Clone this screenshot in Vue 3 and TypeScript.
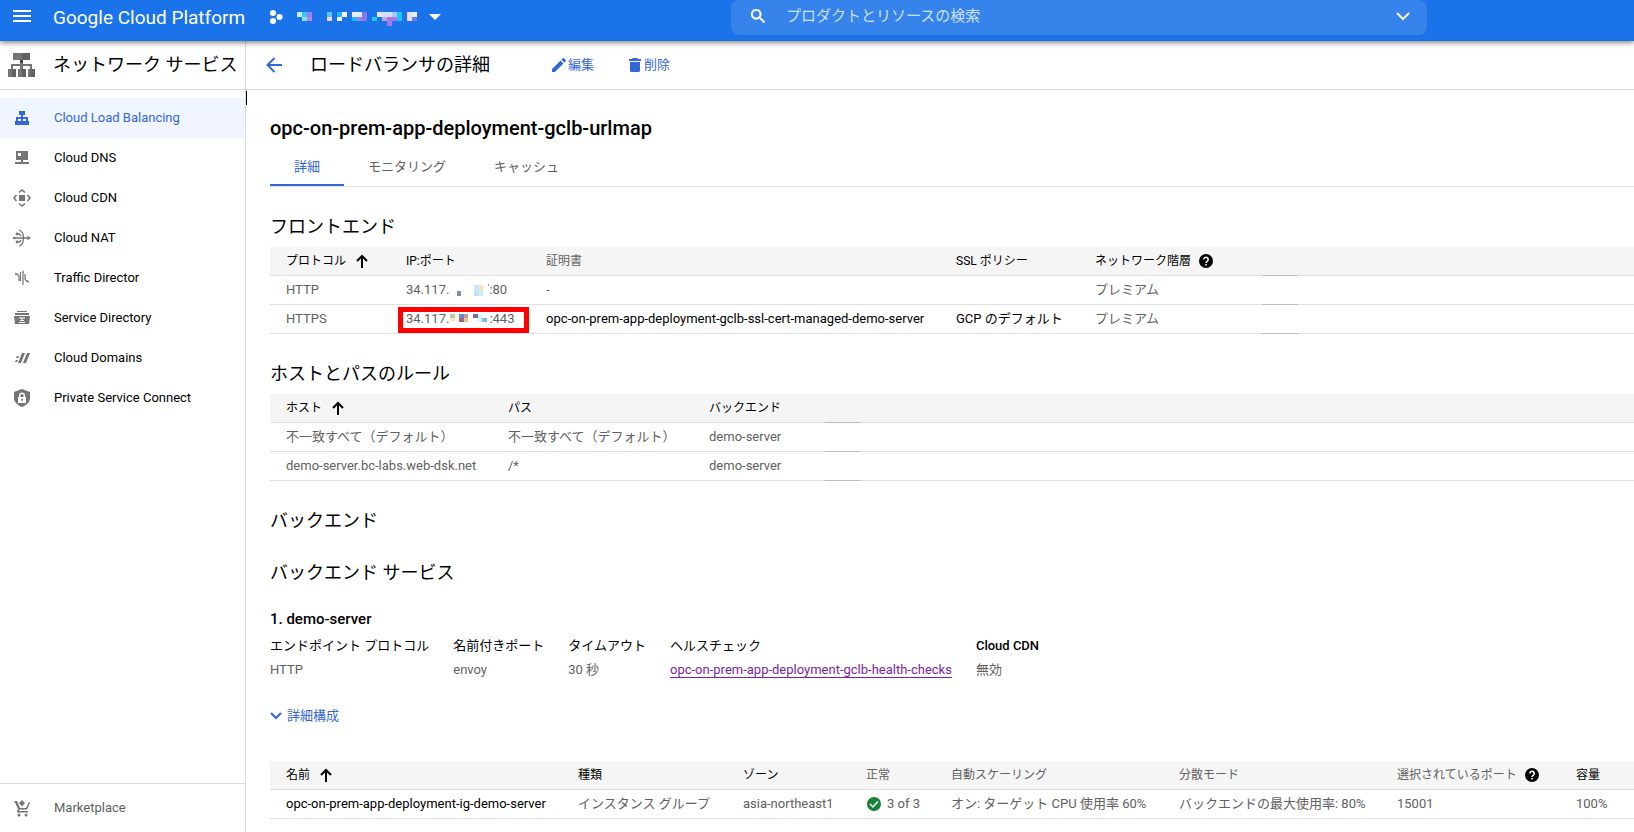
<script setup lang="ts">
interface NavItem {
  label: string
  icon: string
  active?: boolean
}

interface Cell {
  x: number
  y: number
  w: number
  h: number
  fill: string
}

const navItems: NavItem[] = [
  { label: 'Cloud Load Balancing', icon: 'balancing', active: true },
  { label: 'Cloud DNS', icon: 'dns' },
  { label: 'Cloud CDN', icon: 'cdn' },
  { label: 'Cloud NAT', icon: 'nat' },
  { label: 'Traffic Director', icon: 'traffic' },
  { label: 'Service Directory', icon: 'directory' },
  { label: 'Cloud Domains', icon: 'domains' },
  { label: 'Private Service Connect', icon: 'private' },
]

const tabs = ['詳細', 'モニタリング', 'キャッシュ']

const projectCells: Cell[] = [
  { x: 0, y: 0, w: 5, h: 5, fill: '#c3f3ff' },
  { x: 5, y: 0, w: 5, h: 5, fill: '#35c5ff' },
  { x: 10, y: 0, w: 5, h: 5, fill: '#a47ae8' },
  { x: 5, y: 5, w: 5, h: 4, fill: '#8ce0ff' },
  { x: 10, y: 5, w: 5, h: 4, fill: '#b08aea' },
  { x: 30, y: 0, w: 5, h: 5, fill: '#62c4ff' },
  { x: 30, y: 5, w: 5, h: 4, fill: '#f0d5f0' },
  { x: 40, y: 0, w: 5, h: 5, fill: '#1ab8ff' },
  { x: 45, y: 0, w: 5, h: 5, fill: '#ffffff' },
  { x: 40, y: 5, w: 5, h: 4, fill: '#ffffff' },
  { x: 55, y: 0, w: 5, h: 5, fill: '#f7e5f7' },
  { x: 60, y: 0, w: 5, h: 5, fill: '#d0f2fa' },
  { x: 65, y: 0, w: 5, h: 9, fill: '#8b78e8' },
  { x: 55, y: 5, w: 5, h: 4, fill: '#19b5fa' },
  { x: 60, y: 5, w: 5, h: 4, fill: '#a87ce8' },
  { x: 80, y: 0, w: 5, h: 5, fill: '#eee0f5' },
  { x: 85, y: 0, w: 10, h: 5, fill: '#d3def8' },
  { x: 75, y: 5, w: 5, h: 4, fill: '#19ccfa' },
  { x: 85, y: 5, w: 5, h: 4, fill: '#b7a8e6' },
  { x: 90, y: 5, w: 10, h: 4, fill: '#a978e6' },
  { x: 90, y: 9, w: 5, h: 5, fill: '#a978e6' },
  { x: 95, y: 0, w: 5, h: 5, fill: '#a9c8f5' },
  { x: 100, y: 0, w: 5, h: 9, fill: '#18c7ff' },
  { x: 110, y: 0, w: 5, h: 9, fill: '#f0d9f4' },
  { x: 115, y: 0, w: 5, h: 5, fill: '#dcf6fc' },
  { x: 115, y: 5, w: 5, h: 4, fill: '#7475e8' },
]

const httpCells: Cell[] = [
  { x: 8, y: 7, w: 4, h: 5, fill: '#788d9e' },
  { x: 25, y: 1, w: 5, h: 6, fill: '#c4eaff' },
  { x: 30, y: 1, w: 4, h: 6, fill: '#ffe4b8' },
  { x: 25, y: 7, w: 5, h: 5, fill: '#c3e2fa' },
  { x: 30, y: 7, w: 4, h: 5, fill: '#c7f3ff' },
  { x: 39, y: 0, w: 1, h: 2, fill: '#7da8c4' },
]

const httpsCells: Cell[] = [
  { x: 1, y: 0, w: 5, h: 4, fill: '#c5c2a5' },
  { x: 6, y: 0, w: 4, h: 4, fill: '#fff4d6' },
  { x: 10, y: 0, w: 5, h: 4, fill: '#658bc5' },
  { x: 15, y: 0, w: 4, h: 4, fill: '#c5a07d' },
  { x: 1, y: 4, w: 5, h: 4, fill: '#ffeac2' },
  { x: 10, y: 4, w: 5, h: 4, fill: '#9f6280' },
  { x: 15, y: 4, w: 4, h: 4, fill: '#f4c28f' },
  { x: 24, y: 0, w: 5, h: 4, fill: '#77709e' },
  { x: 29, y: 1, w: 4, h: 7, fill: '#cafaff' },
  { x: 33, y: 4, w: 5, h: 4, fill: '#82bde8' },
]
</script>

<template>
  <div class="app">
    <header class="topbar">
      <button class="icon-btn menu" type="button" aria-label="メニュー">
        <svg width="18" height="12" viewBox="0 0 18 12"><path d="M0 1h18M0 6h18M0 11h18" stroke="#fff" stroke-width="2" /></svg>
      </button>
      <a class="brand" href="#">Google Cloud Platform</a>
      <button class="project" type="button" aria-label="プロジェクトを選択">
        <svg width="14" height="14" viewBox="0 0 14 14" fill="#fff"><circle cx="4" cy="3" r="3" /><circle cx="10.500" cy="7" r="3" /><circle cx="4" cy="11" r="3" /></svg>
        <svg class="project-name" width="120" height="14" shape-rendering="crispEdges">
          <rect v-for="(c, i) in projectCells" :key="i" :x="c.x" :y="c.y" :width="c.w" :height="c.h" :fill="c.fill" />
        </svg>
        <svg width="12" height="6" viewBox="0 0 12 6"><path d="M0 0h12L6 6z" fill="#fff" /></svg>
      </button>
      <div class="search">
        <svg width="14" height="14" viewBox="3 3 17.500 17.500" fill="#fff"><path stroke="#fff" stroke-width=".6" d="M15.500 14h-.79l-.28-.27A6.470 6.470 0 0 0 16 9.500 6.500 6.500 0 1 0 9.500 16c1.610 0 3.090-.59 4.230-1.570l.27.28v.79l5 4.990L20.490 19l-4.990-5zm-6 0C7.010 14 5 11.990 5 9.500S7.010 5 9.500 5 14 7.010 14 9.500 11.990 14 9.500 14z" /></svg>
        <input type="search" aria-label="プロダクトとリソースの検索" placeholder="プロダクトとリソースの検索" />
        <button class="icon-btn" type="button" aria-label="検索オプション">
          <svg width="14" height="9" viewBox="0 0 14 9" fill="none"><path d="M1 1l6 6 6-6" stroke="#fff" stroke-width="2" /></svg>
        </button>
      </div>
    </header>

    <div class="body">
      <aside class="sidebar">
        <div class="side-head">
          <svg width="28" height="24" viewBox="0 0 28 24" shape-rendering="crispEdges">
            <path fill="#757575" d="M5 0h17v7H5zM0 16h8v8H0zM10 16h8v8h-8zM20 16h7v8h-7z" />
            <path fill="#616161" d="M14 0h8v7h-8zM4 16h4v8H4zM14 16h4v8h-4zM23 16h4v8h-4z" />
            <path fill="#757575" d="M12 7h3v4h9v5h-2v-3h-7v3h-3v-3H5v3H3v-5h9z" />
            <path fill="#424242" d="M12 7h3v3h-3z" />
          </svg>
          <h2>ネットワーク サービス</h2>
        </div>
        <nav class="nav">
          <a v-for="item in navItems" :key="item.label" href="#" class="nav-item" :class="{ active: item.active }">
            <svg class="nav-icon" width="18" height="18" viewBox="0 0 18 18" fill="currentColor">
              <path v-if="item.icon === 'balancing'" d="M6 2h6v4h-2v2h5v4h1v4h-5v-4h2v-2h-3v2h1v4H7v-4h1v-2H5v2h2v4H2v-4h1V8h5V6H6z" />
              <template v-else-if="item.icon === 'dns'">
                <path fill-rule="evenodd" d="M3 2h12v9H3zM5 4v3h3V4z" />
                <path d="M8 11h2v2h6v2H2v-2h6z" />
              </template>
              <template v-else-if="item.icon === 'cdn'">
                <path d="M6 6h6v6H6z" />
                <path d="M6 3.500 9 1l3 2.500M6 14.500 9 17l3-2.500M3.500 6 1 9l2.500 3M14.500 6 17 9l-2.500 3" fill="none" stroke="currentColor" stroke-width="1.600" />
              </template>
              <template v-else-if="item.icon === 'nat'">
                <path d="M6 1c6 2 6 14 0 16M0 9h16M4 5h2.500l1.500 2M4 13h2.500l1.500-2" fill="none" stroke="currentColor" stroke-width="1.300" />
                <path d="M14.500 6.800 18 9l-3.500 2.200z" />
                <circle cx="1.300" cy="9" r="1.300" /><circle cx="4" cy="5" r="1.400" /><circle cx="4" cy="13" r="1.400" />
              </template>
              <template v-else-if="item.icon === 'traffic'">
                <path d="M3 5c2.500 0 3 1.500 3 4v3M7.500 3v9M10 3v13M12 5v4c0 2.500 1 3 3.500 3.500" fill="none" stroke="currentColor" stroke-width="1.200" />
                <path d="m2 3.500 2.500 1.300L2.500 6.500zM14 11l2.500 2-3 .5zM9 3.500 10 1l1 2.500z" />
              </template>
              <template v-else-if="item.icon === 'directory'">
                <path d="M4 2h10v1H4zM2 4h14v2H2z" />
                <path d="M1 7h16l-1 8H2z" />
                <path d="M6 9h6M9 9v2M7 11.500h4M6 13.500h6" fill="none" stroke="#fff" />
              </template>
              <path v-else-if="item.icon === 'domains'" d="M4 7h2l-1 2H3zM3 11h2l-1 2H2zM9 4h3L8 14H5zM14 4h3l-4 10h-3z" />
              <template v-else>
                <path d="M9 0l8 3v6c0 4-3 7-8 9-5-2-8-5-8-9V3z" />
                <path fill="#fff" fill-rule="evenodd" d="M6 8V6.500a3 3 0 0 1 6 0V8h1v6H5V8zm1.500 0h3V6.500a1.500 1.500 0 0 0-3 0zM9 9.800a1 1 0 1 0 .01 0z" />
              </template>
            </svg>
            {{ item.label }}
          </a>
        </nav>
        <a class="nav-item marketplace" href="#">
          <svg class="nav-icon" width="18" height="18" viewBox="0 0 18 18" fill="currentColor">
            <path d="M2 2h2l3 7h6l3-6 1 1-3 6.500H6.500L6 12h9v1.500H4V12l1-2-3-6.500H1zM9 1l3 3-3 3.500L6 4z" />
            <circle cx="6" cy="16" r="1.500" /><circle cx="13" cy="16" r="1.500" />
          </svg>
          Marketplace
        </a>
        <span class="caret" aria-hidden="true"></span>
      </aside>

      <main class="main">
        <div class="page-head">
          <button class="icon-btn back" type="button" aria-label="戻る">
            <svg width="16" height="16" viewBox="0 0 16 16" fill="none"><path d="M16 8H2M8.500 1 1.500 8l7 7" stroke="#3367d6" stroke-width="2" /></svg>
          </button>
          <h2>ロードバランサの詳細</h2>
          <button class="action edit" type="button">
            <svg width="14" height="14" viewBox="3 3 18 18" fill="#3367d6"><path d="M3 17.250V21h3.750L17.810 9.940l-3.750-3.750zM20.710 7.040a1 1 0 0 0 0-1.410l-2.340-2.340a1 1 0 0 0-1.410 0l-1.830 1.830 3.750 3.750z" /></svg>
            編集
          </button>
          <button class="action" type="button">
            <svg width="12" height="14" viewBox="0 0 12 14" fill="#3367d6"><path d="M4 0h4l1 1h3v2H0V1h3zM1 4h10v8.500a1.500 1.500 0 0 1-1.500 1.500h-7A1.500 1.500 0 0 1 1 12.500z" /></svg>
            削除
          </button>
        </div>

        <div class="content">
          <h1>opc-on-prem-app-deployment-gclb-urlmap</h1>
          <div class="tabs" role="tablist">
            <button v-for="(t, i) in tabs" :key="t" class="tab" :class="{ selected: i === 0 }" type="button" role="tab" :aria-selected="i === 0">{{ t }}</button>
          </div>

          <h3>フロントエンド</h3>
          <table class="frontend">
            <colgroup><col class="w120" /><col class="w140" /><col class="w410" /><col class="w139" /><col class="w183" /><col class="w36" /><col /></colgroup>
            <thead>
              <tr>
                <th scope="col"><span class="head">プロトコル<svg class="sort" width="12" height="14" viewBox="0 0 12 14" fill="none"><path d="M6 14V2M1 7l5-5 5 5" stroke="#000" stroke-width="2" /></svg></span></th>
                <th scope="col">IP:ポート</th>
                <th scope="col" class="muted">証明書</th>
                <th scope="col">SSL ポリシー</th>
                <th scope="col"><span class="head">ネットワーク階層<svg class="help" width="14" height="14" viewBox="0 0 14 14"><circle cx="7" cy="7" r="7" /><path d="M4.800 5.500a2.200 2.200 0 1 1 3.400 1.800C7.300 7.900 7 8.200 7 9" fill="none" stroke="#fff" stroke-width="1.500" /><path d="M6.200 10h1.600v1.600H6.200z" fill="#fff" /></svg></span></th>
                <td class="mark"></td>
                <td></td>
              </tr>
            </thead>
            <tbody>
              <tr>
                <td>HTTP</td>
                <td>34.117.<svg class="redacted" width="40" height="12" shape-rendering="crispEdges"><rect v-for="(c, i) in httpCells" :key="i" :x="c.x" :y="c.y" :width="c.w" :height="c.h" :fill="c.fill" /></svg>:80</td>
                <td>-</td>
                <td></td>
                <td>プレミアム</td>
                <td class="mark"></td>
                <td></td>
              </tr>
              <tr>
                <td>HTTPS</td>
                <td class="flagged">34.117.<svg class="redacted" width="40" height="11" shape-rendering="crispEdges"><rect v-for="(c, i) in httpsCells" :key="i" :x="c.x" :y="c.y" :width="c.w" :height="c.h" :fill="c.fill" /></svg>:443<span class="highlight"></span></td>
                <td class="strong">opc-on-prem-app-deployment-gclb-ssl-cert-managed-demo-server</td>
                <td class="strong">GCP のデフォルト</td>
                <td>プレミアム</td>
                <td class="mark"></td>
                <td></td>
              </tr>
            </tbody>
          </table>

          <h3>ホストとパスのルール</h3>
          <table class="rules">
            <colgroup><col class="w222" /><col class="w201" /><col class="w132" /><col class="w36" /><col /></colgroup>
            <thead>
              <tr>
                <th scope="col"><span class="head">ホスト<svg class="sort" width="12" height="14" viewBox="0 0 12 14" fill="none"><path d="M6 14V2M1 7l5-5 5 5" stroke="#000" stroke-width="2" /></svg></span></th>
                <th scope="col">パス</th>
                <th scope="col">バックエンド</th>
                <td class="mark"></td>
                <td></td>
              </tr>
            </thead>
            <tbody>
              <tr>
                <td>不一致すべて（デフォルト）</td>
                <td>不一致すべて（デフォルト）</td>
                <td>demo-server</td>
                <td class="mark"></td>
                <td></td>
              </tr>
              <tr>
                <td>demo-server.bc-labs.web-dsk.net</td>
                <td>/*</td>
                <td>demo-server</td>
                <td class="mark"></td>
                <td></td>
              </tr>
            </tbody>
          </table>

          <h3>バックエンド</h3>
          <h3>バックエンド サービス</h3>

          <h4>1. demo-server</h4>
          <dl class="facts">
            <div><dt>エンドポイント プロトコル</dt><dd>HTTP</dd></div>
            <div><dt>名前付きポート</dt><dd>envoy</dd></div>
            <div><dt>タイムアウト</dt><dd>30 秒</dd></div>
            <div><dt>ヘルスチェック</dt><dd><a href="#">opc-on-prem-app-deployment-gclb-health-checks</a></dd></div>
            <div><dt>Cloud CDN</dt><dd>無効</dd></div>
          </dl>

          <button class="expand" type="button" aria-expanded="false">
            <svg width="12" height="8" viewBox="0 0 12 8" fill="none"><path d="M1 1l5 5 5-5" stroke="#3367d6" stroke-width="2" /></svg>
            詳細構成
          </button>

          <table class="groups">
            <colgroup><col class="w292" /><col class="w165" /><col class="w123" /><col class="w85" /><col class="w228" /><col class="w218" /><col class="w179" /><col /></colgroup>
            <thead>
              <tr>
                <th scope="col"><span class="head">名前<svg class="sort" width="12" height="14" viewBox="0 0 12 14" fill="none"><path d="M6 14V2M1 7l5-5 5 5" stroke="#000" stroke-width="2" /></svg></span></th>
                <th scope="col">種類</th>
                <th scope="col">ゾーン</th>
                <th scope="col" class="muted">正常</th>
                <th scope="col" class="muted">自動スケーリング</th>
                <th scope="col" class="muted">分散モード</th>
                <th scope="col" class="muted"><span class="head">選択されているポート<svg class="help" width="14" height="14" viewBox="0 0 14 14"><circle cx="7" cy="7" r="7" /><path d="M4.800 5.500a2.200 2.200 0 1 1 3.400 1.800C7.300 7.900 7 8.200 7 9" fill="none" stroke="#fff" stroke-width="1.500" /><path d="M6.200 10h1.600v1.600H6.200z" fill="#fff" /></svg></span></th>
                <th scope="col">容量</th>
              </tr>
            </thead>
            <tbody>
              <tr>
                <td class="strong">opc-on-prem-app-deployment-ig-demo-server</td>
                <td>インスタンス グループ</td>
                <td>asia-northeast1</td>
                <td><span class="head"><svg class="ok" width="14" height="14" viewBox="0 0 14 14"><circle cx="7" cy="7" r="7" fill="#188038" /><path d="m3 7 3 3 5-5.500" fill="none" stroke="#fff" stroke-width="1.500" /></svg>3 of 3</span></td>
                <td>オン: ターゲット CPU 使用率 60%</td>
                <td>バックエンドの最大使用率: 80%</td>
                <td>15001</td>
                <td>100%</td>
              </tr>
            </tbody>
          </table>
        </div>
      </main>
    </div>
  </div>
</template>

<style>
body {
  margin: 0;
  background: #fff;
}
</style>

<style scoped>
.app {
  display: flex;
  flex-direction: column;
  height: 100vh;
  overflow: hidden;
  color: #000;
  font: 400 13px/20px Roboto, "Noto Sans CJK JP", sans-serif;
}
button,
input {
  margin: 0;
  padding: 0;
  border: 0;
  background: none;
  color: inherit;
  font: inherit;
}
a {
  color: inherit;
  text-decoration: none;
}
h1, h2, h3, h4, dl, dd {
  margin: 0;
}
svg {
  flex: none;
}
.icon-btn {
  display: flex;
  align-items: center;
}

.topbar {
  position: relative;
  z-index: 1;
  display: flex;
  flex: none;
  align-items: flex-start;
  height: 41px;
  background: #1a73e8;
  box-shadow: 0 1px 6px rgba(0, 0, 0, 0.6);
  color: #fff;
}
.menu {
  width: 53px;
  height: 32px;
  padding-left: 13px;
}
.brand {
  width: 216px;
  font: 400 19px/35px Roboto, sans-serif;
  white-space: nowrap;
}
.project {
  display: flex;
  align-items: center;
  height: 34px;
}
.project-name {
  margin: 4px 12px 0 14px;
}
.search {
  display: flex;
  align-items: center;
  width: 696px;
  height: 35px;
  box-sizing: border-box;
  margin-left: 290px;
  padding: 0 17px 3px 20px;
  border-radius: 8px;
  background: #3683eb;
}
.search input {
  flex: 1;
  min-width: 0;
  margin-left: 21px;
  outline: 0;
  font-size: 15px;
}
.search input::placeholder {
  color: #cfe1fa;
  opacity: 1;
}

.body {
  display: flex;
  flex: 1;
  min-height: 0;
}
.sidebar {
  position: relative;
  display: flex;
  flex: none;
  flex-direction: column;
  width: 245px;
  border-right: 1px solid #dadce0;
}
.side-head,
.page-head {
  display: flex;
  flex: none;
  align-items: center;
  height: 48px;
  border-bottom: 1px solid #dadce0;
}
.side-head {
  gap: 17px;
  padding-left: 8px;
}
h2,
h3 {
  font-size: 18px;
  font-weight: 400;
  line-height: 28px;
  white-space: nowrap;
}
.nav {
  flex: 1;
  padding-top: 8px;
}
.nav-item {
  display: flex;
  align-items: center;
  height: 40px;
  padding-left: 13px;
}
.nav-icon {
  margin-right: 23px;
  color: #757575;
}
.nav-item.active {
  background: #f0f5ff;
  color: #3367d6;
}
.active .nav-icon {
  color: #3367d6;
}
.marketplace {
  height: 48px;
  border-top: 1px solid #dadce0;
  color: #5f5f5f;
}
.caret {
  position: absolute;
  top: 50px;
  right: -2px;
  width: 1px;
  height: 14px;
  background: #000;
}

.main {
  flex: 1;
  min-width: 0;
}
.back {
  margin: 0 28px 0 20px;
}
.action {
  display: flex;
  align-items: center;
  gap: 3px;
  color: #3367d6;
}
.edit {
  margin: 0 35px 0 62px;
  gap: 2px;
}

.content {
  padding: 24px 0 0 24px;
}
h1 {
  font-size: 20px;
  font-weight: 500;
  line-height: 28px;
}
.tabs {
  display: flex;
  margin-top: 6px;
  border-bottom: 1px solid #e0e0e0;
}
.tab {
  height: 38px;
  padding: 2px 24px 0;
  border-bottom: 2px solid transparent;
  color: #616161;
}
.tab.selected {
  border-color: #3367d6;
  color: #3367d6;
}
h3 {
  margin: 26px 0 6px;
}
h3 + h3 {
  margin-top: 24px;
}
h4 {
  margin-top: 22px;
  font-size: 15px;
  font-weight: 500;
}

table {
  width: 100%;
  border-collapse: separate;
  border-spacing: 0;
  table-layout: fixed;
}
th,
td {
  height: 28px;
  padding: 0 0 0 16px;
  border-bottom: 1px solid #e0e0e0;
  text-align: left;
  white-space: nowrap;
}
th {
  font-size: 12px;
  font-weight: 400;
}
thead tr {
  background: #f5f5f5;
}
td,
.muted {
  color: #616161;
}
.strong {
  color: #000;
}
.mark {
  border-bottom-color: #bdbdbd;
}
.head {
  display: flex;
  align-items: center;
}
.sort {
  margin-left: 10px;
}
.help {
  margin-left: 8px;
}
.ok {
  margin: 0 6px 0 1px;
}
.redacted {
  vertical-align: bottom;
  margin-bottom: 4px;
}
.flagged {
  position: relative;
}
.highlight {
  position: absolute;
  top: 2px;
  left: 8px;
  width: 121px;
  height: 16px;
  border: 5px solid #f00;
}
.w36 { width: 36px; }
.w85 { width: 85px; }
.w120 { width: 120px; }
.w123 { width: 123px; }
.w132 { width: 132px; }
.w139 { width: 139px; }
.w140 { width: 140px; }
.w165 { width: 165px; }
.w179 { width: 179px; }
.w183 { width: 183px; }
.w201 { width: 201px; }
.w218 { width: 218px; }
.w222 { width: 222px; }
.w228 { width: 228px; }
.w292 { width: 292px; }
.w410 { width: 410px; }

.facts {
  display: flex;
  gap: 24px;
  margin-top: 7px;
}
dt {
  margin-bottom: 4px;
  font-weight: 400;
  white-space: nowrap;
}
.facts div:last-child dt {
  font-weight: 500;
}
dd {
  color: #616161;
}
dd a {
  color: #7b1fa2;
  text-decoration: underline;
  text-decoration-skip-ink: none;
  text-decoration-thickness: 1px;
  text-underline-offset: 3px;
}
.expand {
  display: flex;
  align-items: center;
  gap: 5px;
  margin: 26px 0 35px;
  color: #3367d6;
}
</style>
